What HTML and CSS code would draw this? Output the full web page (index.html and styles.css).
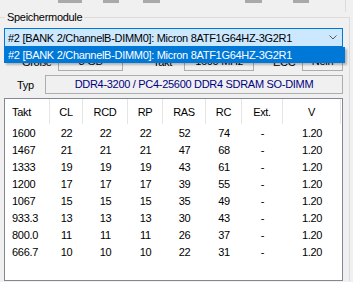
FILE: index.html
```html
<!DOCTYPE html>
<html lang="de">
<head>
    <meta charset="UTF-8">
    <meta name="viewport" content="width=device-width, initial-scale=1.0">
    <title>Speichermodule</title>
    <link rel="stylesheet" href="styles.css">
</head>
<body>

    <div class="toolbar">
        <span class="tb-btn b1"></span>
        <span class="tb-btn b2"></span>
        <span class="tb-btn b3"></span>
        <span class="tb-btn b4"></span>
        <span class="tb-btn b5"></span>
        <span class="tb-edge"></span>
    </div>

    <fieldset class="group">
        <legend>Speichermodule</legend>

        <div class="combo-wrap">
            <div class="combo">
                <span>#2 [BANK 2/ChannelB-DIMM0]: Micron 8ATF1G64HZ-3G2R1</span>
                <svg class="chevron" width="8" height="5" viewBox="0 0 8 5">
                    <polyline points="0.5,0.5 4,4 7.5,0.5" fill="none" stroke="#5a5a5a" stroke-width="1"/>
                </svg>
            </div>
            <div class="dropdown">
                <div class="option selected">#2 [BANK 2/ChannelB-DIMM0]: Micron 8ATF1G64HZ-3G2R1</div>
            </div>
        </div>

        <div class="info-row">
            <span class="lbl lbl-size">Größe</span>
            <span class="field f-size">8 GB</span>
            <span class="lbl lbl-clock">Takt</span>
            <span class="field f-clock">1600 MHz</span>
            <span class="lbl lbl-ecc">ECC</span>
            <span class="field f-ecc">Nein</span>
        </div>

        <div class="info-row">
            <span class="lbl lbl-type">Typ</span>
            <span class="field f-type">DDR4-3200 / PC4-25600 DDR4 SDRAM SO-DIMM</span>
        </div>

        <div class="list">
            <table id="timingTable">
                <colgroup>
                    <col style="width:45px">
                    <col style="width:33px">
                    <col style="width:45px">
                    <col style="width:35px">
                    <col style="width:43px">
                    <col style="width:36px">
                    <col style="width:41px">
                    <col style="width:58px">
                </colgroup>
                <thead>
                    <tr>
                        <th class="first">Takt</th>
                        <th>CL</th>
                        <th>RCD</th>
                        <th>RP</th>
                        <th>RAS</th>
                        <th>RC</th>
                        <th>Ext.</th>
                        <th>V</th>
                    </tr>
                </thead>
                <tbody>
                    <tr><td class="first">1600</td><td>22</td><td>22</td><td>22</td><td>52</td><td>74</td><td>-</td><td>1.20</td></tr>
                    <tr><td class="first">1467</td><td>21</td><td>21</td><td>21</td><td>47</td><td>68</td><td>-</td><td>1.20</td></tr>
                    <tr><td class="first">1333</td><td>19</td><td>19</td><td>19</td><td>43</td><td>61</td><td>-</td><td>1.20</td></tr>
                    <tr><td class="first">1200</td><td>17</td><td>17</td><td>17</td><td>39</td><td>55</td><td>-</td><td>1.20</td></tr>
                    <tr><td class="first">1067</td><td>15</td><td>15</td><td>15</td><td>35</td><td>49</td><td>-</td><td>1.20</td></tr>
                    <tr><td class="first">933.3</td><td>13</td><td>13</td><td>13</td><td>30</td><td>43</td><td>-</td><td>1.20</td></tr>
                    <tr><td class="first">800.0</td><td>11</td><td>11</td><td>11</td><td>26</td><td>37</td><td>-</td><td>1.20</td></tr>
                    <tr><td class="first">666.7</td><td>10</td><td>10</td><td>10</td><td>22</td><td>31</td><td>-</td><td>1.20</td></tr>
                </tbody>
            </table>
        </div>
    </fieldset>

</body>
</html>
```

FILE: styles.css
```css
body {
    margin: 0;
    background: #f0f0f0;
    font-family: "Liberation Sans", Arial, sans-serif;
    font-size: 11px;
    letter-spacing: -0.3px;
    color: #000;
    overflow: hidden;
}

/* bits of the buttons above the group box */
.toolbar {
    display: flex;
    align-items: flex-start;
    height: 3px;
}

.tb-btn {
    height: 3px;
    background: #a9a9a9;
}

.b1 { margin-left: 58px; width: 24px; }
.b2 { margin-left: 21px; width: 16px; }
.b3 { margin-left: 24px; width: 17px; }
.b4 { margin-left: 85px; width: 17px; }
.b5 { margin-left: 31px; width: 16px; }

.tb-edge {
    margin-left: 36px;
    width: 1px;
    height: 12px;
    background: #dcdcdc;
}

.group {
    margin: 8px 3px 0 0;
    padding: 4px 6px 0 4px;
    border: 1px solid #dcdcdc;
    border-left: none;
    border-bottom: none;
    min-inline-size: 0;
}

.group legend {
    margin-left: 1px;
    padding: 0 2px;
    line-height: 13px;
}

.combo-wrap {
    position: relative;
}

.combo {
    display: flex;
    align-items: center;
    height: 19px;
    box-sizing: border-box;
    padding: 0 5px 0 3px;
    border: 1px solid #0078d7;
    background: #cce8ff;
    white-space: nowrap;
}

.chevron {
    margin-left: auto;
}

.dropdown {
    position: absolute;
    top: 100%;
    left: 0;
    right: -2px;
    z-index: 2;
    background: #fff;
    box-shadow: 2px 2px 2px rgba(0,0,0,0.25);
}

.option {
    height: 16px;
    line-height: 16px;
    padding-left: 4px;
    white-space: nowrap;
}

.option.selected {
    background: #0078d7;
    color: #fff;
}

.info-row {
    display: flex;
    align-items: center;
    height: 19px;
    margin-top: 5px;
}

.info-row + .info-row {
    margin-top: 4px;
}

.lbl {
    box-sizing: border-box;
    white-space: nowrap;
}

.lbl-size { width: 54px; padding-left: 18px; }
.lbl-clock { width: 61px; padding-left: 30px; }
.lbl-ecc { width: 48px; padding-left: 19px; }
.lbl-type { width: 41px; padding-left: 13px; }

.field {
    height: 19px;
    line-height: 17px;
    box-sizing: border-box;
    border: 1px solid #adadad;
    background: #f0f0f0;
    text-align: center;
    white-space: nowrap;
}

.f-size { width: 65px; }
.f-clock { width: 70px; }
.f-ecc { width: 41px; }
.f-type { width: 298px; color: #000080; }

.list {
    margin-top: 4px;
    height: 183px;
    box-sizing: border-box;
    border: 1px solid #828790;
    background: #fff;
}

table {
    table-layout: fixed;
    width: 336px;
    border-collapse: separate;
    border-spacing: 0;
    font-size: 11px;
}

th {
    height: 25px;
    padding: 0;
    font-weight: normal;
    text-align: center;
    border-right: 1px solid #e5e5e5;
    box-sizing: border-box;
}

td {
    height: 17px;
    padding: 0;
    text-align: center;
}

th.first, td.first {
    text-align: left;
    padding-left: 7px;
}
```
